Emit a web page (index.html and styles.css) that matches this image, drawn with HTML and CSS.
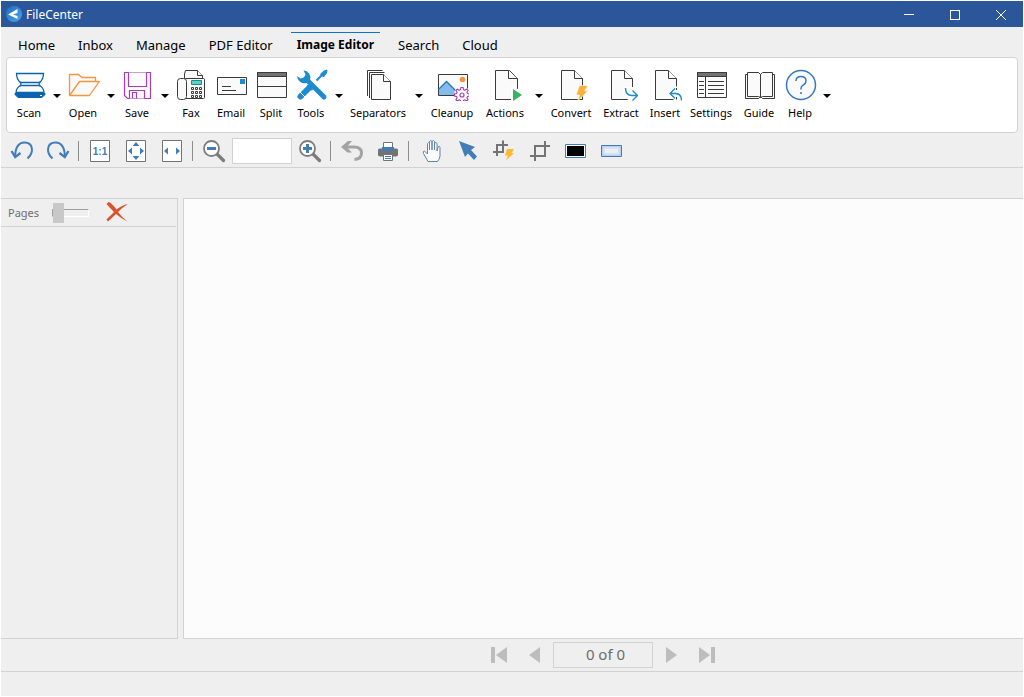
FILE: index.html
```html
<!DOCTYPE html>
<html lang="en">
<head>
<meta charset="utf-8">
<title>FileCenter</title>
<link rel="stylesheet" href="styles.css">
</head>
<body>
<div class="app">
  <header class="titlebar">
    <svg class="logo" viewBox="0 0 16 16" aria-hidden="true">
      <defs><linearGradient id="lg" x1="0" y1="0" x2="1" y2="1"><stop offset="0" stop-color="#1f6fc0"/><stop offset="1" stop-color="#4aa3e8"/></linearGradient></defs>
      <circle cx="8" cy="8" r="8" fill="url(#lg)"/>
      <path d="M2 8.500 11.500 3V7L7 8.500 11.500 10V13z" fill="#fff"/>
    </svg>
    <h1 class="title">FileCenter</h1>
    <div class="window-buttons">
      <button class="wbtn" aria-label="Minimize"><svg viewBox="0 0 10 10" shape-rendering="crispEdges"><path d="M0 4.500H10"/></svg></button>
      <button class="wbtn" aria-label="Maximize"><svg viewBox="0 0 10 10" shape-rendering="crispEdges"><path d="M.5.5h9v9h-9z"/></svg></button>
      <button class="wbtn" aria-label="Close"><svg viewBox="0 0 10 10"><path d="M0 0 10 10M10 0 0 10"/></svg></button>
    </div>
  </header>

  <nav class="tabs">
    <button class="tab">Home</button>
    <button class="tab">Inbox</button>
    <button class="tab">Manage</button>
    <button class="tab">PDF Editor</button>
    <button class="tab active">Image Editor</button>
    <button class="tab">Search</button>
    <button class="tab">Cloud</button>
  </nav>

  <section class="ribbon">
    <button class="cmd">
      <svg viewBox="0 0 32 32" fill="#fafafa" stroke="#0a63b0" stroke-width="1.300"><path d="M2.500 4.500H29.500Q29.500 10.500 25.500 13.500H6.500Q2.500 10.500 2.500 4.500z"/><path d="M6.500 16.500H25.500Q29.500 18.500 30 23.500H2Q2.500 18.500 6.500 16.500z"/><path d="M6.500 13.500V16.500M25.500 13.500V16.500" stroke="#fafafa"/><path d="M5.500 12.500Q8.500 15 5.500 17.500M26.500 12.500Q23.500 15 26.500 17.500" fill="none"/><path d="M1 24.500H31V25.500L28 28.500H4L1 25.500z" fill="#0a63b0" stroke-width="1"/><path d="M26 26.500h2" stroke="#fff" stroke-width="1"/></svg>
      <span>Scan</span></button>
    <button class="drop" aria-label="Scan options"></button>
    <button class="cmd">
      <svg viewBox="0 0 32 32" fill="#fafafa" stroke="#f7943c" stroke-width="1.300" stroke-linejoin="round"><path d="M1.500 26V5.500H10.500L14 8.500H27.500V12.500"/><path d="M1.500 26.500 11.500 12.500H31.300L21.500 26.500z"/></svg>
      <span>Open</span></button>
    <button class="drop" aria-label="Open options"></button>
    <button class="cmd">
      <svg viewBox="0 0 32 32" fill="#fafafa" stroke="#a33fb0" stroke-width="1.200"><path d="M2.500 3.500H28.500V29.500H5.500L2.500 26.500z"/><path d="M6.500 3.500V17.500H24.500V3.500M7.500 29.500V21.500H22.500V29.500M10.500 29.500V23.500H14.500V29.500"/></svg>
      <span>Save</span></button>
    <button class="drop" aria-label="Save options"></button>
    <button class="cmd">
      <svg viewBox="0 0 32 32" fill="#fafafa" stroke="#3a3a3a"><path d="M8.500 10V5L9.500 1.500H21.500L26.500 6.500V10"/><path d="M21.500 1.500V6.500H26.500"/><rect x="8.500" y="9.500" width="20" height="20" rx="1"/><rect x="1.500" y="9.500" width="9" height="21" rx="3"/><path d="M15.500 11.500h10v4h-10z" fill="#5bd0cc" stroke="#158e8a"/><path d="M15.500 18.500h2v2h-2zM19.500 18.500h2v2h-2zM23.500 18.500h2v2h-2zM15.500 22.500h2v2h-2zM19.500 22.500h2v2h-2zM23.500 22.500h2v2h-2zM15.500 26.500h2v2h-2zM19.500 26.500h2v2h-2zM23.500 26.500h2v2h-2z"/></svg>
      <span>Fax</span></button>
    <button class="cmd">
      <svg viewBox="0 0 32 32" fill="#fafafa" stroke="#3a3a3a"><path d="M1.500 8.500H30.500V25.500H1.500z"/><path d="M6 17.500H15M6 21.500H20"/><path d="M24 10h5v5h-5z" fill="#1e8bd0" stroke="none"/></svg>
      <span>Email</span></button>
    <button class="cmd">
      <svg viewBox="0 0 32 32" fill="#fafafa" stroke="#3a3a3a"><path d="M1.500 3.500H30.500V28.500H1.500z"/><path d="M1.500 3.500H30.500V7.500H1.500z" fill="#727272"/><path d="M1.500 17.500H30.500"/></svg>
      <span>Split</span></button>
    <button class="cmd">
      <svg viewBox="0 0 32 32" fill="none" stroke="#1e8bd0"><path d="M10 10 28 28" stroke-width="5" stroke-linecap="round"/><path d="M7.500 1.200A7.500 7.500 0 0 1 14 11L11 14A7.500 7.500 0 0 1 1.200 7L4.500 9.500 8 8.500 9.500 5.500z" fill="#1e8bd0" stroke="none"/><path d="M20.500 11.500 27 5" stroke-width="2.200"/><path d="M24.500 5 28 2 31 1 30.500 4 27.500 8z" fill="#1e8bd0"/><path d="M4.500 27.500 13 19" stroke-width="6" stroke-linecap="round"/><path d="M11.500 16 16.500 21" stroke-width="2"/><path d="M4 23 9 28" stroke="#fff" stroke-width="1"/></svg>
      <span>Tools</span></button>
    <button class="drop" aria-label="Tools options"></button>
    <button class="cmd wide-66">
      <svg viewBox="0 0 32 32" fill="#fafafa" stroke="#3a3a3a"><path d="M4.500 27V1.500H19.500M6.500 29V3.500H21.500" fill="none"/><path d="M8.500 30.500V5.500H20.500L27.500 12.500V30.500z"/><path d="M20.500 5.500V12.500H27.500"/></svg>
      <span>Separators</span></button>
    <button class="drop" aria-label="Separators options"></button>
    <button class="cmd wide-54">
      <svg viewBox="0 0 32 32"><path d="M1.500 5.500H30.500V26.500H1.500z" fill="#fafafa" stroke="#3a3a3a"/><path d="M2 20.500 9.500 12.500 19 22 17 26H2z" fill="#83bbea"/><path d="M1.500 20.500 9.500 12.500 18 21" fill="none" stroke="#2476bd" stroke-width="1.300"/><circle cx="25.500" cy="10.500" r="2.800" fill="#f7943c"/><circle cx="25" cy="25" r="7.800" fill="#fff"/><path d="M24 18.500h2l.5 2.200 1.300.6 2-1.200 1.300 1.300-1.200 2 .6 1.100 2 .5v2l-2 .5-.6 1.200 1.200 2-1.300 1.300-2-1.200-1.300.6-.5 2h-2l-.5-2-1.300-.6-2 1.200-1.300-1.300 1.200-2-.6-1.200-2-.5v-2l2-.5.6-1.100-1.200-2 1.300-1.300 2 1.200 1.300-.6z" fill="#fff" stroke="#a33fb0" stroke-width="1.100"/><circle cx="25" cy="26" r="2" fill="#fff" stroke="#a33fb0" stroke-width="1.200"/></svg>
      <span>Cleanup</span></button>
    <button class="cmd wide-52">
      <svg viewBox="0 0 32 32"><path d="M5.500 1.500H19.500L27.500 9.500V30.500H5.500z" fill="#fafafa" stroke="#3a3a3a"/><path d="M18.500 1.500V9.500H27.500" fill="#fafafa" stroke="#3a3a3a"/><path d="M21 17 28 20V32H21z" fill="#fff"/><path d="M23 20 32 26 23 32z" fill="#35b463"/></svg>
      <span>Actions</span></button>
    <button class="drop" aria-label="Actions options"></button>
    <button class="cmd wide-52">
      <svg viewBox="0 0 32 32"><path d="M5.500 1.500H18.500L26.500 9.500V30.500H5.500z" fill="#fafafa" stroke="#3a3a3a"/><path d="M18.500 1.500V9.500H26.500" fill="#fafafa" stroke="#3a3a3a"/><path d="M23.500 16.500H32L28.500 22H32L21.500 32 23.500 26H20z" fill="#fbb03b" stroke="#fff" stroke-width=".6"/></svg>
      <span>Convert</span></button>
    <button class="cmd wide-48">
      <svg viewBox="0 0 32 32"><path d="M5.500 1.500H18.500L26.500 9.500V30.500H5.500z" fill="#fafafa" stroke="#3a3a3a"/><path d="M18.500 1.500V9.500H26.500" fill="#fafafa" stroke="#3a3a3a"/><path d="M17 18H32V32H23L17 25z" fill="#fff"/><path d="M19.500 19Q19.500 26.500 26 26.500H31M26.500 21.500 31.500 26.500 26.500 31.500" fill="none" stroke="#1e8bd0" stroke-width="1.400"/></svg>
      <span>Extract</span></button>
    <button class="cmd">
      <svg viewBox="0 0 32 32"><path d="M5.500 1.500H18.500L26.500 9.500V30.500H5.500z" fill="#fafafa" stroke="#3a3a3a"/><path d="M18.500 1.500V9.500H26.500" fill="#fafafa" stroke="#3a3a3a"/><path d="M18 24 26 17 29 20V32H25L19 26z" fill="#fff"/><path d="M26.500 19V21M26.500 28V30.500" stroke="#3a3a3a"/><path d="M31.500 31.500Q31.500 24.500 25 24.500H20M25 19.500 20 24.500 25 29.500" fill="none" stroke="#1e8bd0" stroke-width="1.400"/></svg>
      <span>Insert</span></button>
    <button class="cmd wide-52">
      <svg viewBox="0 0 32 32" fill="#fafafa" stroke="#3a3a3a"><path d="M1.500 3.500H30.500V28.500H1.500z"/><path d="M1.500 3.500H30.500V7.500H1.500z" fill="#727272"/><path d="M9.500 7.500V28.500M3 12.500H8M3 16.500H8M3 20.500H8M3 24.500H8M12 12.500H28M12 16.500H28M12 20.500H28M12 24.500H28"/></svg>
      <span>Settings</span></button>
    <button class="cmd wide-44">
      <svg viewBox="0 0 32 32" fill="#fafafa" stroke="#3a3a3a"><path d="M3.500 5.500H1.500V29.500H14.500L16.500 27.500 18.500 29.500H30.500V5.500H28.500"/><path d="M3.500 3.500H14.500L16.500 5.500 18.500 3.500H28.500V27.500H18.500L16.500 28.500 14.500 27.500H3.500z"/><path d="M16.500 5V28.500"/></svg>
      <span>Guide</span></button>
    <button class="cmd wide-38">
      <svg viewBox="0 0 32 32" fill="none" stroke="#3579c4" stroke-width="1.500"><circle cx="16" cy="16" r="14.500" fill="#fafafa"/><path d="M11 12Q11 7.500 16 7.500T21 12Q21 14.500 18.500 15.800T16 19.500V20.500M16 23V25"/></svg>
      <span>Help</span></button>
    <button class="drop" aria-label="Help options"></button>
  </section>

  <section class="toolbar">
    <button class="tool" aria-label="Rotate left"><svg viewBox="0 0 24 24" fill="none" stroke="#427db8" stroke-width="2"><path d="M5 18Q5.500 3.500 14.500 3.500C23 3.500 24.500 13 17.500 19.500"/><path d="M1.500 12 5.200 18 10.500 14" stroke-width="2.300"/></svg></button>
    <button class="tool" aria-label="Rotate right"><svg viewBox="0 0 24 24" fill="none" stroke="#427db8" stroke-width="2"><path d="M19 18Q18.500 3.500 9.500 3.500C1 3.500-.5 13 6.500 19.500"/><path d="M22.500 12 18.800 18 13.500 14" stroke-width="2.300"/></svg></button>
    <span class="sep"></span>
    <button class="tool" aria-label="Actual size"><svg viewBox="0 0 24 24"><path d="M2.500 1.500h19v21h-19z" fill="#fff" stroke="#737373"/><text x="12" y="16" class="ratio">1:1</text></svg></button>
    <button class="tool" aria-label="Fit page"><svg viewBox="0 0 24 24"><path d="M2.500 1.500h19v21h-19z" fill="#fff" stroke="#737373"/><path d="M12 3 15.500 7H8.500zM12 21 8.500 17H15.500zM4 12 8 8.500V15.500zM20 12 16 15.500V8.500z" fill="#427db8"/></svg></button>
    <button class="tool" aria-label="Fit width"><svg viewBox="0 0 24 24"><path d="M2.500 1.500h19v21h-19z" fill="#fff" stroke="#737373"/><path d="M4 12 8 8.500V15.500zM20 12 16 15.500V8.500z" fill="#427db8"/></svg></button>
    <span class="sep"></span>
    <button class="tool" aria-label="Zoom out"><svg viewBox="0 0 24 24"><path d="M15 15 21.500 21.500" stroke="#7d7d7d" stroke-width="3.200" stroke-linecap="round"/><circle cx="9.500" cy="9.500" r="7.500" fill="#fff" stroke="#7d7d7d" stroke-width="1.800"/><path d="M5 9.500h9" stroke="#427db8" stroke-width="3"/></svg></button>
    <input class="zoom" type="text" aria-label="Zoom level">
    <button class="tool" aria-label="Zoom in"><svg viewBox="0 0 24 24"><path d="M15 15 21.500 21.500" stroke="#7d7d7d" stroke-width="3.200" stroke-linecap="round"/><circle cx="9.500" cy="9.500" r="7.500" fill="#fff" stroke="#7d7d7d" stroke-width="1.800"/><path d="M5 9.500h9M9.500 5v9" stroke="#427db8" stroke-width="3"/></svg></button>
    <span class="sep"></span>
    <button class="tool" aria-label="Undo"><svg viewBox="0 0 24 24" fill="none" stroke="#a3a3a3"><path d="M5 8H14Q21.500 8 21.500 14Q21.500 20 14.500 20.500" stroke-width="3"/><path d="M1 8 8 2H12L7.500 7V9L12 13.500H7.500z" fill="#a3a3a3" stroke="none"/></svg></button>
    <button class="tool" aria-label="Print"><svg viewBox="0 0 24 24"><path d="M2 11Q2 9.500 3.500 9.500H20.500Q22 9.500 22 11V16.500L20 17.500H4L2 16.500z" fill="#737373"/><path d="M7.500 3.500h9v7h-9z" fill="#fff" stroke="#737373"/><path d="M6 8h12v4H6z" fill="#427db8"/><path d="M7.500 15.500h9v6h-9z" fill="#fff" stroke="#737373"/><path d="M9 17.500h6M9 19.500h6" stroke="#427db8"/></svg></button>
    <span class="sep last"></span>
    <button class="tool" aria-label="Pan"><svg viewBox="0 0 24 24" fill="#fafafa" stroke="#5f84aa" stroke-linejoin="round"><path d="M8 22.500 3.500 14.500Q2.500 12 4.500 12L7.500 15V4.500Q8.500 2.500 9.500 4.500V11 2.500Q11 .5 12 2.500V11 2.500Q13.500.5 14.500 2.500V11 4.500Q16 2.500 17 4.500V12L18 8Q20 6.500 20 8.500V17Q19.500 20.500 17.500 22.500z"/></svg></button>
    <button class="tool" aria-label="Select"><svg viewBox="0 0 24 24"><path d="M3 2 19 8 15 11 21 17.500 18 21 12 14.500 9 18z" fill="#427db8"/></svg></button>
    <button class="tool" aria-label="Auto crop"><svg viewBox="0 0 24 24"><path d="M11 1.500V13H1M5 17V6H16" fill="none" stroke="#737373" stroke-width="2"/><path d="M15 10H22L19.500 14H22L14 21.500 16 16.500H13z" fill="#fbb92b"/></svg></button>
    <button class="tool" aria-label="Crop"><svg viewBox="0 0 24 24"><path d="M2 17H17V2M7 22V7H22" fill="none" stroke="#737373" stroke-width="2"/></svg></button>
    <button class="tool" aria-label="Black out"><svg viewBox="0 0 24 24"><path d="M1.500 5.500h20v13h-20z" fill="#fff" stroke="#427db8"/><path d="M3 7h17v10H3z"/></svg></button>
    <button class="tool" aria-label="White out"><svg viewBox="0 0 24 24"><path d="M1.500 6.500h20v11h-20z" fill="#b4cff0" stroke="#427db8"/><rect x="3" y="8" width="17" height="8" rx="2" fill="#d3e2f5"/><rect x="5" y="10" width="13" height="4" rx="1" fill="#efefef"/></svg></button>
  </section>

  <div class="band"></div>

  <main class="work">
    <aside class="pages">
      <div class="pages-head">
        <label for="size">Pages</label>
        <input id="size" class="slider" type="range" min="0" max="100" value="0">
        <button class="delete" aria-label="Delete page"><svg viewBox="0 0 24 24"><path d="M3.500 1Q7 2 11.500 8.500Q17 4 23 3Q18 6 13 11Q17 16.500 22.500 20.500Q16 17.500 11 13Q7 17 3 20.500L1.500 18.500Q5 15 9 11Q4.500 6.500 1.500 3z" fill="#d9542d"/></svg></button>
      </div>
    </aside>
    <div class="canvas"></div>
  </main>

  <footer class="pager">
    <button class="tool" aria-label="First page"><svg viewBox="0 0 24 24" fill="#bdbdbd"><path d="M4 4h4v16H4zM20 4v16L9 12z"/></svg></button>
    <button class="tool" aria-label="Previous page"><svg viewBox="0 0 24 24" fill="#bdbdbd"><path d="M17 4v16L6 12z"/></svg></button>
    <input class="page-no" type="text" value="0 of 0" aria-label="Page" readonly>
    <button class="tool" aria-label="Next page"><svg viewBox="0 0 24 24" fill="#bdbdbd"><path d="M7 4v16L18 12z"/></svg></button>
    <button class="tool" aria-label="Last page"><svg viewBox="0 0 24 24" fill="#bdbdbd"><path d="M4 4v16L15 12zM16 4h4v16h-4z"/></svg></button>
  </footer>
  <div class="status"></div>
</div>
</body>
</html>
```
FILE: styles.css
```css
* { box-sizing: border-box; }

body {
  margin: 0;
  padding: 1px;
  background: #fff;
  font: 12px/16px "Noto Sans", "Open Sans", sans-serif;
  color: #000;
}

button {
  margin: 0;
  padding: 0;
  border: 0;
  background: none;
  font: inherit;
  color: inherit;
}

.app {
  display: flex;
  flex-direction: column;
  min-height: calc(100vh - 2px);
  background: #efefef;
}

.titlebar {
  display: flex;
  align-items: center;
  gap: 4px;
  height: 26px;
  padding-left: 5px;
  background: #2b579a;
  color: #fff;
}
.logo { width: 16px; height: 16px; }
.title { margin: 0; padding-top: 2px; font-size: 12px; font-weight: 400; }
.window-buttons { display: flex; margin-left: auto; }
.wbtn { display: grid; place-items: center; width: 46px; height: 26px; padding: 2px 0 0 1px; }
.wbtn svg { width: 10px; height: 10px; fill: none; stroke: #fff; }

.tabs {
  display: flex;
  gap: 13px;
  height: 30px;
  padding: 5px 0 0 12px;
  font-size: 13px;
}
.tab { padding: 0 5px; border-top: 1px solid transparent; }
.tab.active { padding: 0 6px 1px; border-color: #0078d7; font-size: 12px; font-weight: 700; }

.ribbon {
  display: flex;
  height: 76px;
  margin: 0 5px;
  padding: 0 3px;
  border: 1px solid #d2d2d2;
  border-radius: 4px;
  background: #fff;
  font-size: 11px;
}
.cmd {
  display: flex;
  flex-direction: column;
  align-items: center;
  gap: 4px;
  width: 40px;
  padding-top: 11px;
  white-space: nowrap;
}
.cmd svg { flex: none; width: 32px; height: 32px; }
.cmd span { padding-right: 2px; }
.wide-38 { width: 38px; }
.wide-44 { width: 44px; }
.wide-48 { width: 48px; }
.wide-52 { width: 52px; }
.wide-54 { width: 54px; }
.wide-66 { width: 66px; }
.drop { display: grid; place-items: center; width: 14px; padding-top: 2px; }
.drop::before {
  content: "";
  border: 4px solid transparent;
  border-top-color: #000;
  border-bottom: 0;
}

.toolbar {
  display: flex;
  align-items: center;
  height: 35px;
  padding: 2px 0 0 3px;
  border-bottom: 1px solid #d2d2d2;
}
.tool { display: grid; place-items: center; width: 36px; height: 32px; }
.tool svg { width: 24px; height: 24px; }
.ratio { font: 700 10px "Liberation Sans", Arial, sans-serif; fill: #427db8; text-anchor: middle; }
.sep { width: 6px; height: 20px; background: linear-gradient(#8c8c8c, #8c8c8c) 2px 0 / 1px 100% no-repeat; }
.sep.last { width: 8px; }
.zoom { width: 60px; height: 26px; padding: 2px 4px; border: 1px solid #d2d2d2; background: #fff; }

.band { height: 30px; }

.work { display: flex; flex: 1; gap: 5px; }
.pages { width: 177px; border: 1px solid #d2d2d2; border-left: 0; }
.pages-head {
  display: flex;
  align-items: center;
  height: 28px;
  margin-right: 1px;
  padding-left: 7px;
  border-bottom: 1px solid #d2d2d2;
  color: #6d6d6d;
  font-size: 11px;
}
.pages-head label { width: 44px; }
.slider { appearance: none; width: 37px; height: 20px; margin: 0 16px 0 0; background: none; }
.slider::-webkit-slider-runnable-track { height: 8px; border: 1px solid #fff; border-top-color: #a0a0a0; border-left-color: #a0a0a0; }
.slider::-webkit-slider-thumb { appearance: none; width: 11px; height: 20px; margin-top: -7px; background: #c8c8c8; }
.delete { display: grid; place-items: center; width: 24px; height: 24px; }
.delete svg { width: 24px; height: 24px; }
.canvas { flex: 1; border: 1px solid #d2d2d2; border-right: 0; background: #fcfcfc; }

.pager {
  display: flex;
  align-items: center;
  justify-content: center;
  height: 33px;
  padding-left: 182px;
  border-bottom: 1px solid #d2d2d2;
}
.page-no {
  width: 100px;
  height: 26px;
  padding: 0 0 2px 5px;
  border: 1px solid #d2d2d2;
  background: #efefef;
  color: #6d6d6d;
  font: 15px/20px "Noto Sans", "Open Sans", sans-serif;
  text-align: center;
}
.status { height: 24px; }
```
